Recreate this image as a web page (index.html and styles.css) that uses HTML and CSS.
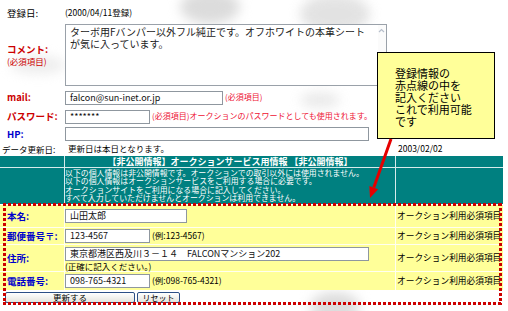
FILE: index.html
```html
<!DOCTYPE html>
<html lang="ja">
<head>
    <meta charset="UTF-8">
    <meta name="viewport" content="width=device-width, initial-scale=1.0">
    <title>会員情報の変更</title>

    <link rel="stylesheet" href="styles.css">
</head>
<body>

<div class="page">

    <!-- 背景のうすい透かし -->
    <div class="watermark" aria-hidden="true">
        <span class="wm-blob wm-a"></span>
        <span class="wm-blob wm-b"></span>
        <span class="wm-blob wm-c"></span>
        <span class="wm-blob wm-d"></span>
        <span class="wm-blob wm-e"></span>
    </div>

    <form class="sheet" onsubmit="return false">

        <!-- 公開情報 -->
        <div class="row r-date">
            <div class="label plain">登録日:</div>
            <div class="cell">(2000/04/11登録)</div>
            <div class="side"></div>
        </div>

        <div class="row r-comment">
            <div class="label red two">コメント:<br><span class="sub">(必須項目)</span></div>
            <div class="cell">
                <div class="memo">
                    <div class="memo-text">ターボ用Fバンパー以外フル純正です。オフホワイトの本革シート<br>が気に入っています。</div>
                    <div class="memo-scroll">
                        <svg width="7" height="5" viewBox="0 0 7 5"><path d="M1 4 L3.5 1.5 L6 4" fill="none" stroke="#b7bfcc" stroke-width="1.2"/></svg>
                    </div>
                </div>
            </div>
            <div class="side"></div>
        </div>

        <div class="row r-mail">
            <div class="label red">mail:</div>
            <div class="cell">
                <div class="field w-mail">falcon@sun-inet.or.jp</div>
                <span class="note">(必須項目)</span>
            </div>
            <div class="side"></div>
        </div>

        <div class="row r-pass">
            <div class="label red">パスワード:</div>
            <div class="cell">
                <div class="field w-short">*******</div>
                <span class="note">(必須項目)オークションのパスワードとしても使用されます。</span>
            </div>
            <div class="side"></div>
        </div>

        <div class="row r-hp">
            <div class="label blue">HP:</div>
            <div class="cell">
                <div class="field w-long"></div>
            </div>
            <div class="side"></div>
        </div>

        <div class="row r-update">
            <div class="label plain tight">データ更新日:</div>
            <div class="cell pad">更新日は本日となります。</div>
            <div class="side pad">2003/02/02</div>
        </div>

        <!-- 非公開情報 -->
        <div class="private">
            <div class="row p-head">
                <div class="tcell"></div>
                <div class="tcell title">【非公開情報】オークションサービス用情報 【非公開情報】</div>
                <div class="tcell"></div>
            </div>
            <div class="row p-body">
                <div class="tcell"></div>
                <div class="tcell info">
                    以下の個人情報は非公開情報です。オークションでの取引以外には使用されません。<br>
                    以下の個人情報はオークションサービスをご利用する場合に必要です。<br>
                    オークションサイトをご利用になる場合に記入してください。<br>
                    すべて入力していただけませんとオークションは利用できません。
                </div>
                <div class="tcell"></div>
            </div>
        </div>

        <div class="required">
            <div class="row y-name">
                <div class="ycell label blue">本名:</div>
                <div class="ycell"><div class="field w-name">山田太郎</div></div>
                <div class="ycell need">オークション利用必須項目</div>
            </div>
            <div class="row y-zip">
                <div class="ycell label blue">郵便番号〒:</div>
                <div class="ycell">
                    <div class="field w-short">123-4567</div>
                    <span class="hint">(例:123-4567)</span>
                </div>
                <div class="ycell need">オークション利用必須項目</div>
            </div>
            <div class="row y-addr">
                <div class="ycell label blue">住所:</div>
                <div class="ycell stack">
                    <div class="field w-long">東京都港区西及川３－１４　FALCONマンション202</div>
                    <span class="hint">(正確に記入ください。)</span>
                </div>
                <div class="ycell need">オークション利用必須項目</div>
            </div>
            <div class="row y-tel">
                <div class="ycell label blue">電話番号:</div>
                <div class="ycell">
                    <div class="field w-short">098-765-4321</div>
                    <span class="hint">(例:098-765-4321)</span>
                </div>
                <div class="ycell need">オークション利用必須項目</div>
            </div>
        </div>

        <div class="actions">
            <button type="submit" class="btn btn-update">更新する</button>
            <button type="reset" class="btn btn-reset">リセット</button>
        </div>
    </form>

    <!-- 注釈 -->
    <div class="focus-frame"></div>

    <div class="callout">
        登録情報の<br>
        赤点線の中を<br>
        記入ください<br>
        これで利用可能<br>
        です
    </div>

    <svg class="arrow" width="508" height="311" viewBox="0 0 508 311">
        <line x1="391" y1="139" x2="373.8" y2="187.5" stroke="#e60000" stroke-width="3"/>
        <polygon points="370,198 378.2,189.2 369.3,186" fill="#e60000"/>
    </svg>

</div>

</body>
</html>
```

FILE: styles.css
```css
body {
    margin: 0;
    font-family: "Noto Sans CJK JP", "Noto Sans", sans-serif;
    font-size: 8.5px;
    line-height: 1.1;
    color: #000;
    background: #fff;
}

.page {
    position: relative;
    width: 508px;
    height: 311px;
    padding-top: 4px;
    box-sizing: border-box;
    overflow: hidden;
}

/* 透かし */
.watermark {
    position: absolute;
    left: 0;
    top: 0;
    width: 508px;
    height: 311px;
}

.wm-blob {
    position: absolute;
    border-radius: 50%;
    background: #dcdcdc;
    filter: blur(6px);
}

.wm-a { left: 180px; top: -10px; width: 60px; height: 34px; }
.wm-b { left: 300px; top: -6px; width: 70px; height: 40px; opacity: 0.8; }
.wm-c { left: 300px; top: 92px; width: 40px; height: 16px; opacity: 0.6; }
.wm-d { left: 310px; top: 292px; width: 50px; height: 30px; }
.wm-e { left: 10px; top: 56px; width: 56px; height: 18px; opacity: 0.5; }

.sheet {
    position: relative;
    width: 503px;
}

.row {
    display: grid;
    grid-template-columns: 64px 330px 1fr;
    column-gap: 1px;
    align-items: center;
}

.cell {
    display: flex;
    align-items: center;
}

.pad { padding-left: 3px; }
.side.pad { padding-left: 2px; }

.label {
    padding-left: 7px;
    font-size: 9.5px;
    font-weight: bold;
    line-height: 11px;
    white-space: nowrap;
}

.label.two { line-height: 12px; }
.label.plain { font-weight: normal; }
.label.tight { padding-left: 2px; font-size: 8.5px; }
.red { color: #cc0000; }
.blue { color: #0000cc; }

.sub {
    font-size: 8.5px;
    font-weight: normal;
}

.r-date { height: 18px; }
.r-comment { height: 66px; }
.r-mail { height: 19px; }
.r-pass { height: 19px; }
.r-hp { height: 16px; }
.r-update { height: 14px; }

/* コメント欄 */
.memo {
    display: flex;
    width: 322px;
    height: 62px;
    box-sizing: border-box;
    border: 1px solid #9aa1a9;
    background: #fff;
}

.memo-text {
    flex: 1;
    padding: 1px 4px;
    font-size: 10px;
    line-height: 12px;
    color: #222;
    white-space: nowrap;
    overflow: hidden;
}

.memo-scroll {
    width: 8px;
    padding-top: 3px;
    background: #fbfbfb;
}

.memo-scroll svg { display: block; }

/* 入力欄 */
.field {
    height: 14px;
    box-sizing: border-box;
    border: 1px solid #8f979f;
    background: #fff;
    padding: 0 4px;
    font-size: 9px;
    line-height: 12px;
    white-space: nowrap;
    overflow: hidden;
    color: #111;
}

.w-mail { width: 158px; }
.w-short { width: 85px; }
.w-name { width: 122px; }
.w-long { width: 304px; }

.note {
    margin-left: 2px;
    font-size: 8px;
    color: #ee1133;
    white-space: nowrap;
}

.hint {
    margin-left: 2px;
    white-space: nowrap;
}

/* 非公開情報 */
.private {
    display: grid;
    row-gap: 1px;
    background: #d6ebeb;
}

.tcell {
    align-self: stretch;
    background: #008080;
    color: #fff;
}

.p-head { height: 11px; }
.p-body { height: 36px; }

.title {
    text-align: center;
    font-size: 9px;
    font-weight: bold;
    line-height: 11px;
    white-space: nowrap;
}

.info {
    padding-top: 1px;
    font-size: 7.9px;
    line-height: 8.4px;
    white-space: nowrap;
    overflow: hidden;
}

/* 必須項目 */
.required {
    display: grid;
    row-gap: 1px;
    margin-top: 1px;
    background: #fffff0;
}

.required .row { align-items: stretch; }

.ycell {
    display: flex;
    align-items: center;
    background: #ffff99;
}

.ycell.stack {
    flex-direction: column;
    align-items: flex-start;
    justify-content: flex-start;
    padding-top: 2px;
}

.ycell.stack .hint {
    margin: 0;
    line-height: 10px;
}

.need {
    padding-left: 1px;
    font-size: 8.7px;
    white-space: nowrap;
    overflow: hidden;
}

.y-name { height: 22px; }
.y-zip { height: 16px; }
.y-addr { height: 26px; }
.y-tel { height: 18px; }

/* ボタン */
.actions {
    display: flex;
    gap: 2px;
    padding: 2px 0 0 5px;
}

.btn {
    height: 11px;
    padding: 0;
    border: 1px solid #2c4f86;
    border-radius: 2px;
    background: linear-gradient(#ffffff, #e6e5de);
    font-family: inherit;
    font-size: 8.5px;
    line-height: 9px;
    color: #000;
}

.btn-update { width: 130px; }
.btn-reset { width: 43px; font-size: 8px; }

/* 注釈 */
.focus-frame {
    position: absolute;
    left: 3px;
    top: 203px;
    width: 499px;
    height: 102px;
    background:
        repeating-linear-gradient(90deg, #cc0000 0 3px, transparent 3px 5px) left top / 100% 3px no-repeat,
        repeating-linear-gradient(90deg, #cc0000 0 3px, transparent 3px 5px) left bottom / 100% 3px no-repeat,
        repeating-linear-gradient(180deg, #cc0000 0 3px, transparent 3px 5px) left top / 3px 100% no-repeat,
        repeating-linear-gradient(180deg, #cc0000 0 3px, transparent 3px 5px) right top / 3px 100% no-repeat;
}

.callout {
    position: absolute;
    left: 377px;
    top: 52px;
    width: 118px;
    height: 87px;
    box-sizing: border-box;
    border: 1px solid #000;
    background: #ffff99;
    padding: 14px 0 0 17px;
    font-size: 11px;
    line-height: 12px;
}

.arrow {
    position: absolute;
    left: 0;
    top: 0;
    pointer-events: none;
}
```
